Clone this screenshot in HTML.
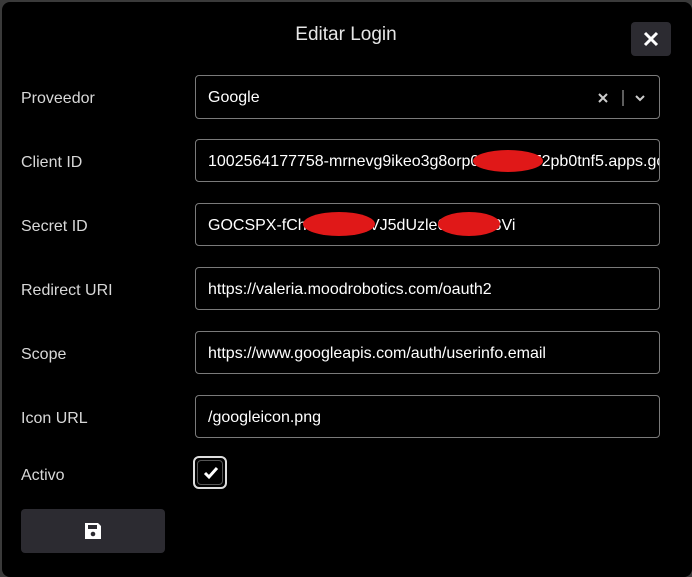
<html><head><style>
body{margin:0;width:692px;height:572px;background:#3a3a3a;font-family:"Liberation Sans",sans-serif;overflow:hidden;position:relative}
.m{position:absolute;left:2px;top:2px;width:690px;height:575px;background:#000;border-radius:8px}
.t{position:absolute;left:0;width:692px;top:24px;text-align:center;color:#e6e6e6;font-size:19px}
.x{position:absolute;left:631px;top:22px;width:40px;height:34px;background:#2c2b31;border-radius:4px}
.l{position:absolute;left:21px;color:#d8d8d8;font-size:16px}
.i{position:absolute;left:195px;width:465px;height:43px;border:1px solid #7a7a7a;border-radius:4px;color:#fff;font-size:16px;line-height:43px;padding-left:12px;box-sizing:border-box;white-space:nowrap;overflow:hidden}
.r{position:absolute;background:#e01818;border-radius:50%}
</style></head><body><div class="m"></div>
<div class="t">Editar Login</div>
<div class="x"><svg width="40" height="34"><path d="M14 11l12 12M26 11l-12 12" stroke="#fff" stroke-width="3"/></svg></div>
<div class="l" style="top:90px">Proveedor</div>
<div class="i" style="top:75px;height:44px;line-height:44px">Google
<svg style="position:absolute;left:398px;top:14px" width="60" height="16"><path d="M5 4l8 8M13 4l-8 8" stroke="#ccc" stroke-width="2"/><path d="M29 -4v26" stroke="#bbb" stroke-width="1"/><path d="M42 6l4 4 4-4" stroke="#ccc" stroke-width="2" fill="none"/></svg></div>
<div class="l" style="top:154px">Client ID</div>
<div class="i" style="top:139px">1002564177758-mrnevg9ikeo3g8orp0aaaaa272pb0tnf5.apps.googleusercontent.com</div>
<div class="r" style="left:473px;top:150px;width:70px;height:22px"></div>
<div class="l" style="top:218px">Secret ID</div>
<div class="i" style="top:203px">GOCSPX-fCh0000000VJ5dUzle00000K3Vi</div>
<div class="r" style="left:303px;top:212px;width:72px;height:24px"></div>
<div class="r" style="left:438px;top:212px;width:62px;height:24px"></div>
<div class="l" style="top:282px">Redirect URI</div>
<div class="i" style="top:267px">https://valeria.moodrobotics.com/oauth2</div>
<div class="l" style="top:346px">Scope</div>
<div class="i" style="top:331px">https://www.googleapis.com/auth/userinfo.email</div>
<div class="l" style="top:410px">Icon URL</div>
<div class="i" style="top:395px">/googleicon.png</div>
<div class="l" style="top:467px">Activo</div>
<div style="position:absolute;left:193px;top:456px;width:34px;height:33px;border:2px solid #ddd;border-radius:6px;box-sizing:border-box"><div style="position:absolute;left:2px;top:2px;width:26px;height:25px;border:1px solid #555;border-radius:4px;box-sizing:border-box"></div><svg style="position:absolute;left:7px;top:6px" width="18" height="18"><path d="M3 9l4 4 8-9" stroke="#fff" stroke-width="3" fill="none"/></svg></div>
<div style="position:absolute;left:21px;top:509px;width:144px;height:44px;background:#2c2b31;border-radius:4px"><svg style="position:absolute;left:62px;top:12px" width="20" height="20"><path d="M2 2h13l3 3v13H2z" fill="#fff"/><rect x="5" y="4" width="9" height="4" fill="#2c2b31"/><circle cx="10" cy="13" r="2.3" fill="#2c2b31"/></svg></div>
</body></html>
